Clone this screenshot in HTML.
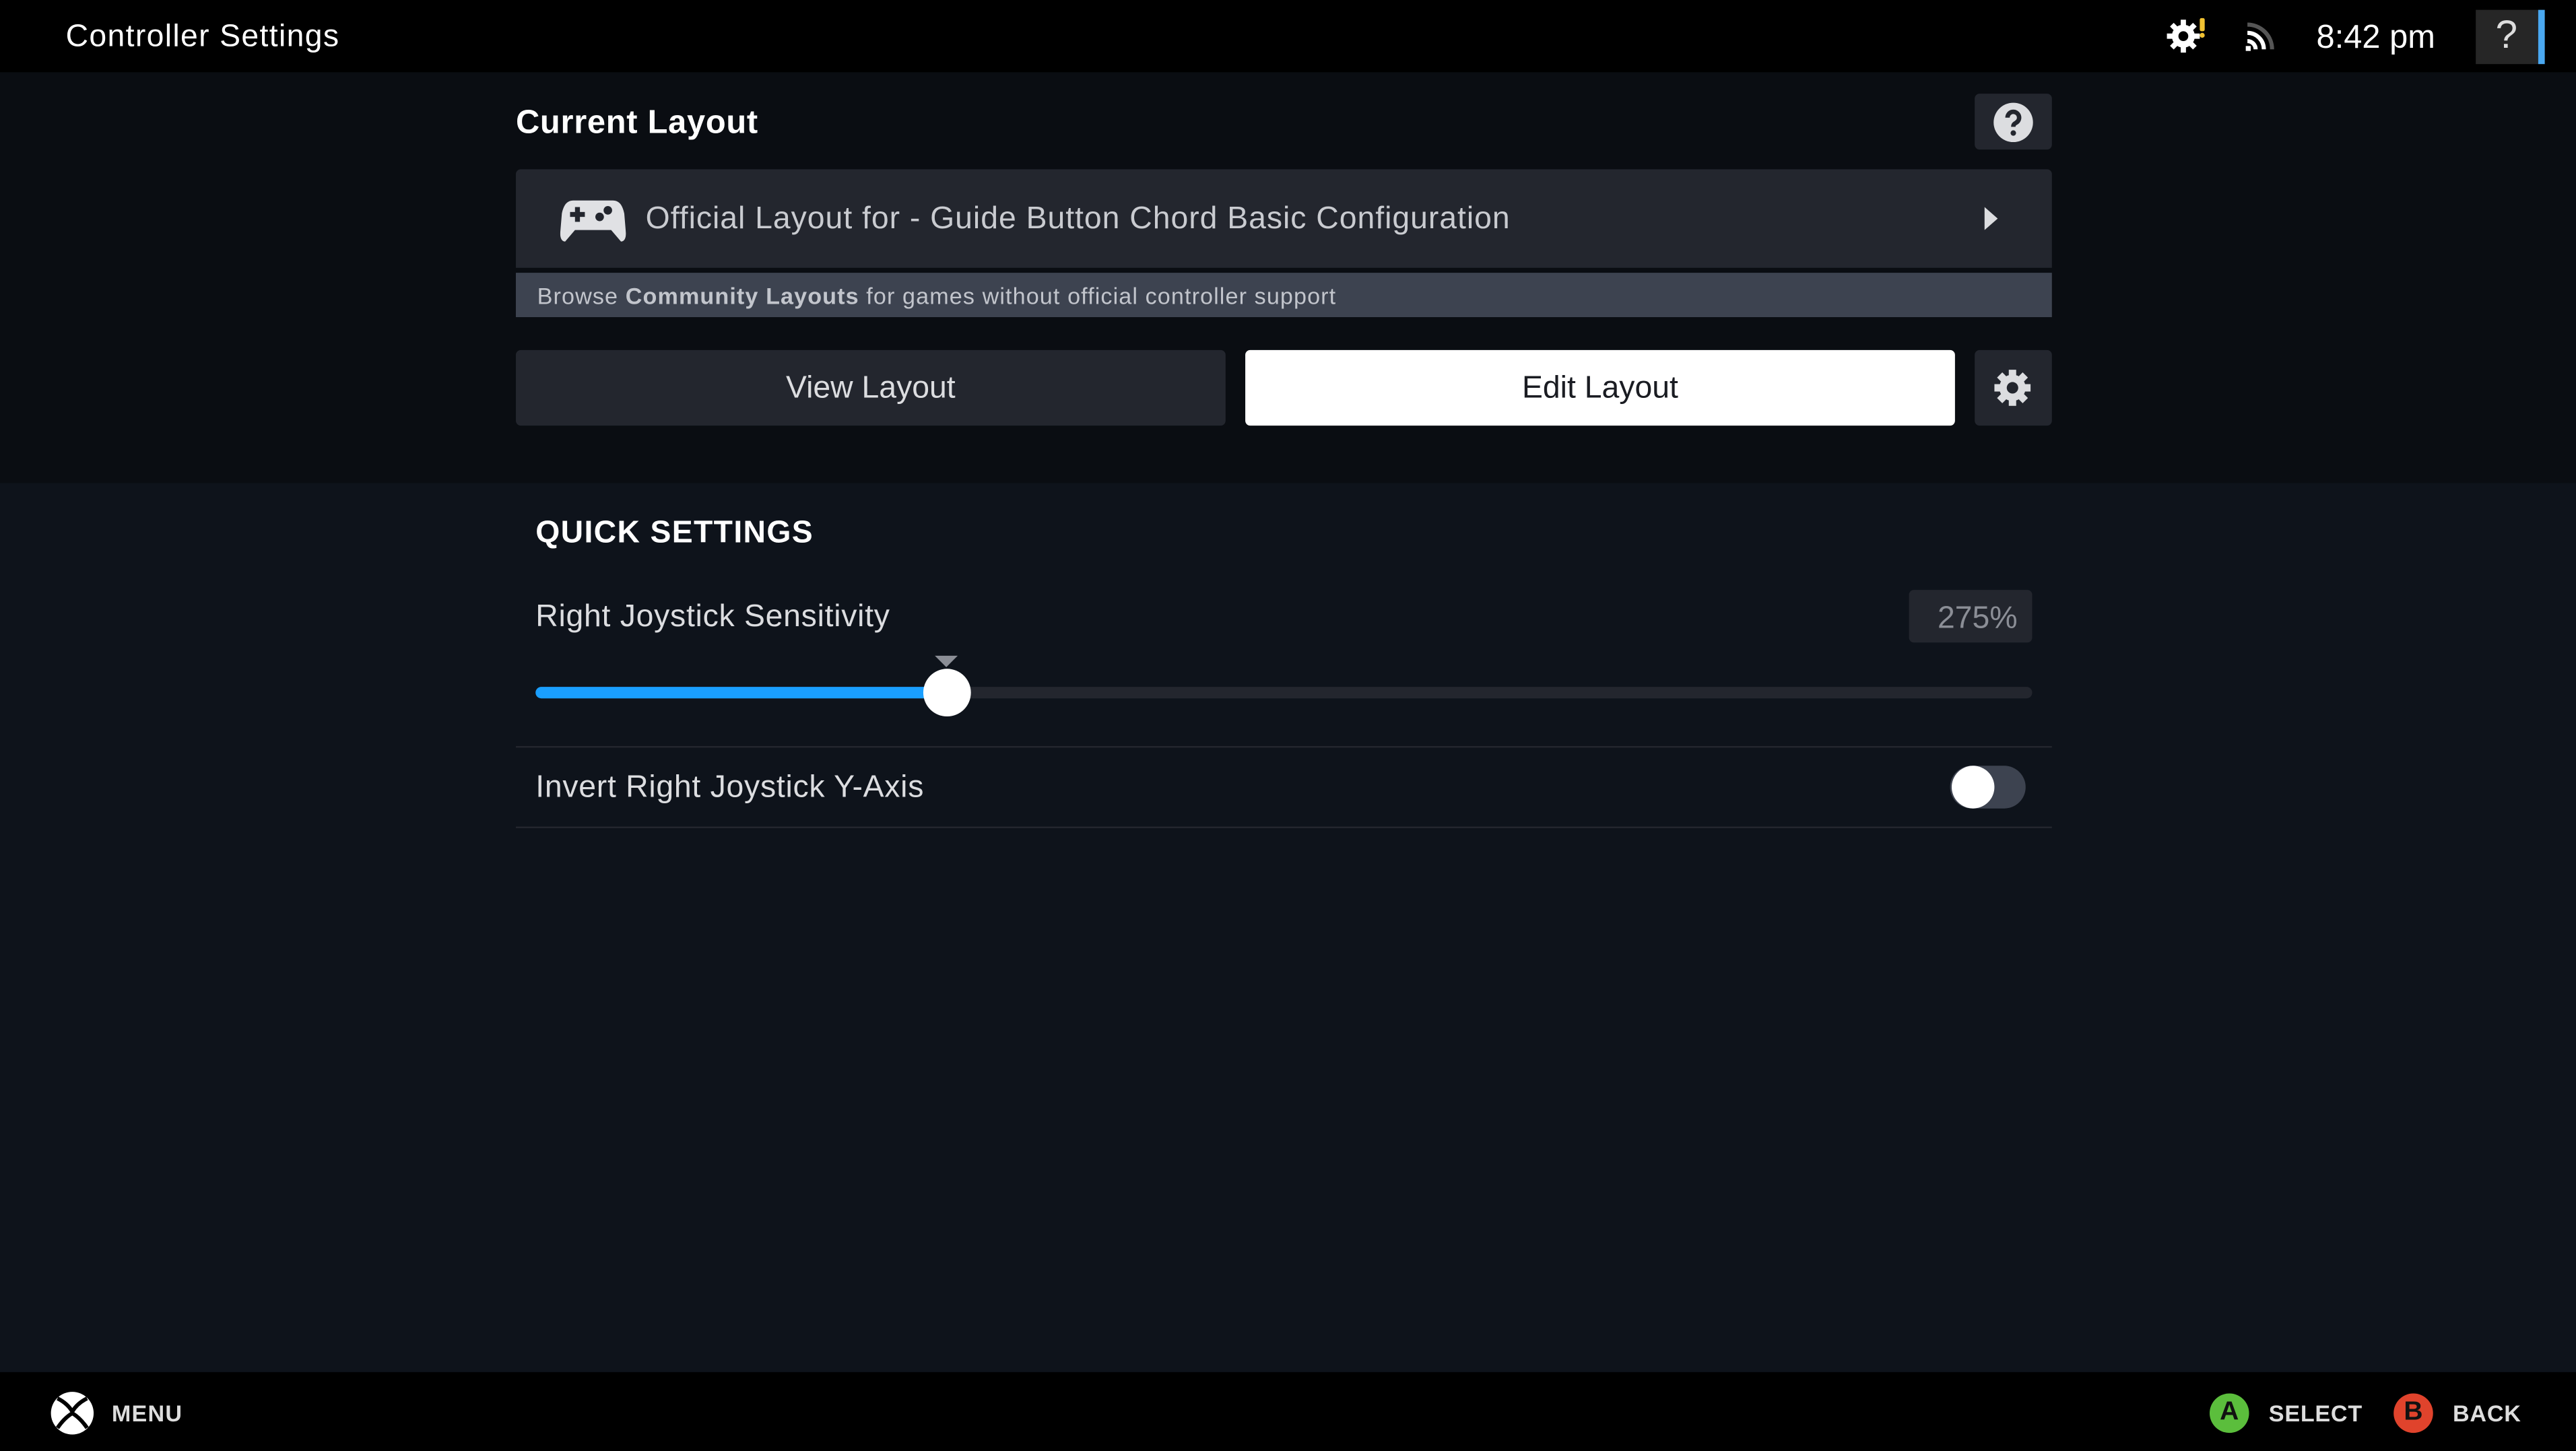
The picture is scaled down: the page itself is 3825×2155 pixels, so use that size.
<!DOCTYPE html>
<html><head><meta charset="utf-8"><style>
html,body{margin:0;padding:0;background:#0e131b;overflow:hidden}
body{width:3825px;height:2155px}
#r{position:absolute;left:0;top:0;width:1568px;height:883px;transform:scale(2.4394,2.4405);transform-origin:0 0;font-family:"Liberation Sans","DejaVu Sans",sans-serif;color:#fff;background:#0e131b}
.a{position:absolute}
</style></head><body><div id="r">
<div class="a" style="left:0;top:0;width:1568px;height:44px;background:#000"></div>
<div class="a" style="left:40px;top:12px;font-size:19px;color:#fff;letter-spacing:0.55px">Controller Settings</div>
<svg class="a" style="left:1318px;top:10px" width="26" height="24" viewBox="0 0 26 24"><g fill="#fff"><circle cx="11" cy="12" r="7"/><g stroke="#fff" stroke-width="3.2"><line x1="11" y1="2" x2="11" y2="22"/><line x1="1" y1="12" x2="21" y2="12"/><line x1="4" y1="5" x2="18" y2="19"/><line x1="18" y1="5" x2="4" y2="19"/></g></g><circle cx="11" cy="12" r="3" fill="#000"/><rect x="21" y="1" width="3" height="8" rx="1" fill="#f1c232"/><circle cx="22.5" cy="11.5" r="1.5" fill="#f1c232"/></svg>
<svg class="a" style="left:1366px;top:12px" width="20" height="20" viewBox="0 0 20 20" fill="none"><path d="M2 13a5 5 0 0 1 5 5" stroke="#fff" stroke-width="2.5"/><path d="M2 8a10 10 0 0 1 10 10" stroke="#fff" stroke-width="2.5"/><path d="M2 3a15 15 0 0 1 15 15" stroke="#555" stroke-width="2.5"/><rect x="1" y="16" width="3" height="3" fill="#fff"/></svg>
<div class="a" style="left:1410px;top:12px;font-size:20px">8:42 pm</div>
<div class="a" style="left:1507px;top:6px;width:38px;height:33px;background:#262626"></div>
<div class="a" style="left:1545px;top:6px;width:4px;height:33px;background:#4aa8f0"></div>
<div class="a" style="left:1519px;top:8px;font-size:24px;color:#ddd">?</div>

<div class="a" style="left:0;top:44px;width:1568px;height:250px;background:#0a0d12"></div>
<div class="a" style="left:314px;top:64px;font-size:20px;font-weight:bold;letter-spacing:0.3px">Current Layout</div>
<div class="a" style="left:1202px;top:57px;width:47px;height:34px;background:#23262e;border-radius:3px"></div>
<svg class="a" style="left:1213px;top:62px" width="25" height="25" viewBox="0 0 24 24"><circle cx="12" cy="12" r="11.5" fill="#dcdde0"/><path d="M8.6 9.2a3.4 3.4 0 1 1 5 3c-1.2.7-1.6 1.2-1.6 2.4" stroke="#23262e" stroke-width="2.6" fill="none"/><circle cx="12" cy="18.2" r="1.6" fill="#23262e"/></svg>
<div class="a" style="left:314px;top:103px;width:935px;height:60px;background:#23262e;border-radius:3px 3px 0 0"></div>
<svg class="a" style="left:341px;top:118px" width="40" height="32" viewBox="0 0 40 32"><path d="M8 4h24c4 0 6 3 7 8l1 12c0 3-1 5-3 5l-6-7H9l-6 7c-2 0-3-2-3-5l1-12C2 7 4 4 8 4z" fill="#e0e1e4"/><rect x="9" y="8" width="3" height="9" fill="#23262e"/><rect x="6" y="11" width="9" height="3" fill="#23262e"/><circle cx="24" cy="14" r="2.6" fill="#23262e"/><circle cx="29" cy="10" r="2.6" fill="#23262e"/></svg>
<div class="a" style="left:393px;top:123px;font-size:19px;color:#c9cbd0;letter-spacing:0.4px">Official Layout for - Guide Button Chord Basic Configuration</div>
<svg class="a" style="left:1207px;top:126px" width="10" height="14" viewBox="0 0 10 14"><path d="M1 0l8 7-8 7z" fill="#dcdde0"/></svg>
<div class="a" style="left:314px;top:166px;width:935px;height:27px;background:#3d4350"></div>
<div class="a" style="left:327px;top:172px;font-size:14px;color:#c2c5cc;letter-spacing:0.45px">Browse <b>Community Layouts</b> for games without official controller support</div>
<div class="a" style="left:314px;top:213px;width:432px;height:46px;background:#23262e;border-radius:3px"></div>
<div class="a" style="left:314px;top:226px;width:432px;text-align:center;font-size:19px;color:#dcdde0">View Layout</div>
<div class="a" style="left:758px;top:213px;width:432px;height:46px;background:#fff;border-radius:3px"></div>
<div class="a" style="left:758px;top:226px;width:432px;text-align:center;font-size:19px;color:#1a1c22">Edit Layout</div>
<div class="a" style="left:1202px;top:213px;width:47px;height:46px;background:#23262e;border-radius:3px"></div>
<svg class="a" style="left:1213px;top:224px" width="24" height="24" viewBox="0 0 24 24"><g stroke="#dcdde0" stroke-width="4.5"><line x1="12" y1="1" x2="12" y2="23"/><line x1="1" y1="12" x2="23" y2="12"/><line x1="4.2" y1="4.2" x2="19.8" y2="19.8"/><line x1="19.8" y1="4.2" x2="4.2" y2="19.8"/></g><circle cx="12" cy="12" r="8" fill="#dcdde0"/><circle cx="12" cy="12" r="3.5" fill="#23262e"/></svg>

<div class="a" style="left:326px;top:314px;font-size:19px;font-weight:bold;letter-spacing:0.55px">QUICK SETTINGS</div>
<div class="a" style="left:326px;top:365px;font-size:19px;color:#dcdde0;letter-spacing:0.3px">Right Joystick Sensitivity</div>
<div class="a" style="left:1162px;top:359px;width:75px;height:32px;background:#23262e;border-radius:3px"></div>
<div class="a" style="left:1162px;top:366px;width:66px;text-align:right;font-size:19px;color:#8b8e96">275%</div>
<div class="a" style="left:326px;top:418px;width:911px;height:7px;background:#23262e;border-radius:4px"></div>
<div class="a" style="left:326px;top:418px;width:250px;height:7px;background:#1a9fff;border-radius:4px"></div>
<svg class="a" style="left:569px;top:399px" width="14" height="8"><path d="M0 0h14l-7 7z" fill="#8b8e96"/></svg>
<div class="a" style="left:562px;top:407px;width:29px;height:29px;border-radius:50%;background:#fff"></div>
<div class="a" style="left:314px;top:454px;width:935px;height:1px;background:#23262e"></div>
<div class="a" style="left:326px;top:469px;font-size:19px;color:#dcdde0;letter-spacing:0.3px">Invert Right Joystick Y-Axis</div>
<div class="a" style="left:1187px;top:466px;width:46px;height:26px;border-radius:13px;background:#3d4350"></div>
<div class="a" style="left:1188px;top:466px;width:26px;height:26px;border-radius:50%;background:#fff"></div>
<div class="a" style="left:314px;top:503px;width:935px;height:1px;background:#23262e"></div>

<div class="a" style="left:0;top:835px;width:1568px;height:48px;background:#000"></div>
<svg class="a" style="left:30px;top:846px" width="28" height="28" viewBox="0 0 28 28"><circle cx="14" cy="14" r="13" fill="#fff"/><path d="M5 5q6 3 9 8q3-5 9-8M5 23q4-6 9-9q5 3 9 9" stroke="#000" stroke-width="2.4" fill="none"/></svg>
<div class="a" style="left:68px;top:852px;font-size:14px;font-weight:bold;color:#ddd;letter-spacing:.5px">MENU</div>
<div class="a" style="left:1345px;top:848px;width:24px;height:24px;border-radius:50%;background:#5bbe3c;color:#111;font-weight:bold;font-size:16px;text-align:center;line-height:24px">A</div>
<div class="a" style="left:1381px;top:852px;font-size:14px;font-weight:bold;color:#ddd;letter-spacing:.3px">SELECT</div>
<div class="a" style="left:1457px;top:848px;width:24px;height:24px;border-radius:50%;background:#e0432c;color:#111;font-weight:bold;font-size:16px;text-align:center;line-height:24px">B</div>
<div class="a" style="left:1493px;top:852px;font-size:14px;font-weight:bold;color:#ddd;letter-spacing:.3px">BACK</div>
</div></body></html>
